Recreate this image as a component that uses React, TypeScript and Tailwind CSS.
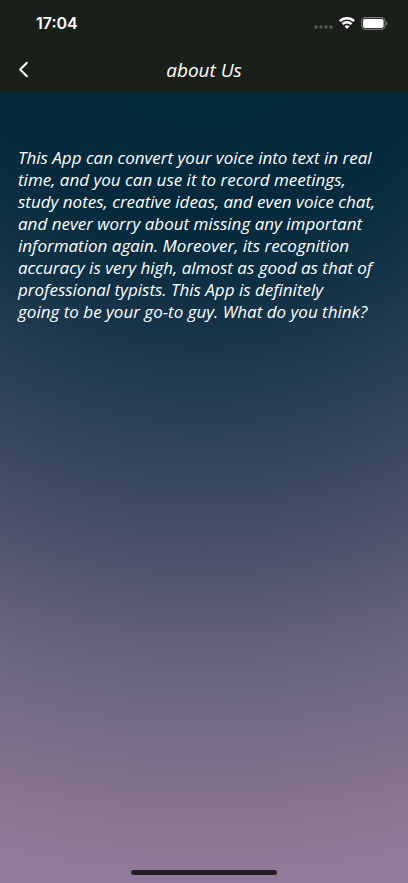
import { ChevronLeft } from "lucide-react";

const ABOUT_LINES = [
  "This App can convert your voice into text in real",
  "time, and you can use it to record meetings,",
  "study notes, creative ideas, and even voice chat,",
  "and never worry about missing any important",
  "information again. Moreover, its recognition",
  "accuracy is very high, almost as good as that of",
  "professional typists. This App is definitely",
  "going to be your go-to guy. What do you think?",
];

function WifiIcon() {
  return (
    <svg viewBox="0 0 16 12" className="h-3 w-4" fill="none" stroke="white" strokeWidth="2.5" aria-hidden="true">
      <path d="M0.9 4.2a10.1 10.1 0 0 1 14.2 0" />
      <path d="M3.5 7.2a6.3 6.3 0 0 1 9 0" />
      <path d="M5.6 9.4a3.3 3.3 0 0 1 4.8 0L8 11.9z" fill="white" stroke="none" />
    </svg>
  );
}

function BatteryIcon() {
  return (
    <svg viewBox="0 0 27 13" className="h-[13px] w-[27px]" aria-hidden="true">
      <rect x="0.6" y="0.6" width="23.4" height="11.8" rx="3.6" fill="none" stroke="#747774" strokeWidth="1.1" />
      <rect x="2" y="2" width="20.6" height="9" rx="2" fill="white" />
      <path d="M25 4.5c1.9.5 1.9 3.5 0 4z" fill="#747774" />
    </svg>
  );
}

function StatusBar() {
  return (
    <div className="flex h-[46px] items-center justify-between pr-5 pl-9">
      <span className="font-['Inter'] text-base leading-5 font-semibold">17:04</span>
      <div className="flex items-center gap-1.5">
        {/* no signal */}
        <svg viewBox="0 0 19 4" className="mt-2 h-1 w-[19px]" fill="#555955" aria-hidden="true">
          <circle cx="2" cy="2" r="1.8" />
          <circle cx="7" cy="2" r="1.8" />
          <circle cx="12" cy="2" r="1.8" />
          <circle cx="17" cy="2" r="1.8" />
        </svg>
        <WifiIcon />
        <BatteryIcon />
      </div>
    </div>
  );
}

export default function App() {
  return (
    <div className="flex min-h-screen flex-col bg-[#1b1f1a] font-['Bradley_Hand','Open_Sans',sans-serif] text-white">
      <StatusBar />
      <header className="grid h-[47px] grid-cols-[48px_1fr_48px] items-center">
        <button type="button" aria-label="Back" className="flex h-full items-center pl-[10px]">
          <ChevronLeft size={27} strokeWidth={2} absoluteStrokeWidth />
        </button>
        <h1 className="text-center text-[19px] leading-6 italic">about Us</h1>
      </header>
      <main className="flex flex-1 flex-col justify-between bg-[radial-gradient(circle_at_50%_-100px,#032b3e_100px,#04293c_220px,#0c2f42_285px,#16344a_337px,#233c53_394px,#2f425a_445px,#3b4862_495px,#485069_548px,#52566f_587px,#63607b_650px,#6d6784_697px,#786c88_745px,#82718d_795px,#8a7793_842px,#907b9a_890px)] px-[18px] pt-[54px] pb-2">
        <p className="text-[17px] leading-[22px] italic">
          {ABOUT_LINES.map((line) => (
            <span key={line} className="block">
              {line}
            </span>
          ))}
        </p>
        <div className="h-[5px] w-[146px] self-center rounded-full bg-[#232124]" />
      </main>
    </div>
  );
}
